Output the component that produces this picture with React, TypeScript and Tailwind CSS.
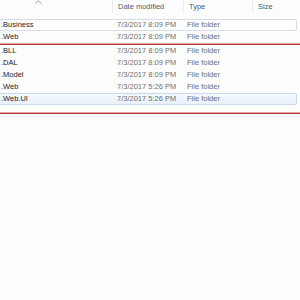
import React from "react";

type Row = {
  name: string;
  date: string;
  boxed?: "hover" | "selected";
};

const topRows: Row[] = [
  { name: ".Business", date: "7/3/2017 8:09 PM", boxed: "hover" },
  { name: ".Web", date: "7/3/2017 8:09 PM" },
];

const bottomRows: Row[] = [
  { name: ".BLL", date: "7/3/2017 8:09 PM" },
  { name: ".DAL", date: "7/3/2017 8:09 PM" },
  { name: ".Model", date: "7/3/2017 8:09 PM" },
  { name: ".Web", date: "7/3/2017 5:26 PM" },
  { name: ".Web.UI", date: "7/3/2017 5:26 PM", boxed: "selected" },
];

function FileRow({ row }: { row: Row }) {
  let box = "border-y border-r border-transparent";
  if (row.boxed === "hover") {
    box = "border-y border-r border-[#d5dde6] bg-white rounded-r-[2px]";
  }
  if (row.boxed === "selected") {
    box =
      "border-y border-r border-[#c9d8ea] bg-gradient-to-b from-[#f5f9fe] to-[#e9f1fb] rounded-r-[2px]";
  }
  return (
    <div
      className={`grid grid-cols-[117px_70px_1fr] items-center h-[12px] w-[297px] ${box}`}
    >
      <span className="pl-[1px] text-[#1c1c1c] whitespace-nowrap">{row.name}</span>
      <span className="text-[#6e6e6e] whitespace-nowrap">{row.date}</span>
      <span className="text-[#6e6e6e] whitespace-nowrap">File folder</span>
    </div>
  );
}

function RedLine() {
  return (
    <div className="w-full">
      <div className="h-[1px] bg-[#e8a4a4]" />
      <div className="h-[1px] bg-[#b8393c]" />
    </div>
  );
}

export default function App() {
  return (
    <div
      className="w-[300px] h-[300px] overflow-hidden bg-[#fdfdfd] text-[7.5px] leading-none"
      style={{ fontFamily: '"Liberation Sans", "Open Sans", sans-serif' }}
    >
      {/* column header */}
      <div className="grid grid-cols-[112px_71px_69px_1fr] h-[13px] text-[#4f5d70]">
        <div className="relative">
          <svg
            className="absolute left-[35px] top-0"
            width="7"
            height="4"
            viewBox="0 0 7 4"
          >
            <path d="M0.5 3.5 L3.5 0.8 L6.5 3.5" fill="none" stroke="#8a96a6" strokeWidth="0.9" />
          </svg>
        </div>
        <div className="border-l border-[#ececec] pl-[5px] flex items-center">Date modified</div>
        <div className="border-l border-[#ececec] pl-[5px] flex items-center">Type</div>
        <div className="border-l border-[#ececec] pl-[5px] flex items-center">Size</div>
      </div>

      <div className="h-[6px]" />

      <div className="flex flex-col">
        {topRows.map((row, i) => (
          <FileRow key={i} row={row} />
        ))}
      </div>

      <RedLine />

      <div className="flex flex-col pt-[0px]">
        {bottomRows.map((row, i) => (
          <FileRow key={i} row={row} />
        ))}
      </div>

      <div className="h-[7px]" />
      <RedLine />
    </div>
  );
}
